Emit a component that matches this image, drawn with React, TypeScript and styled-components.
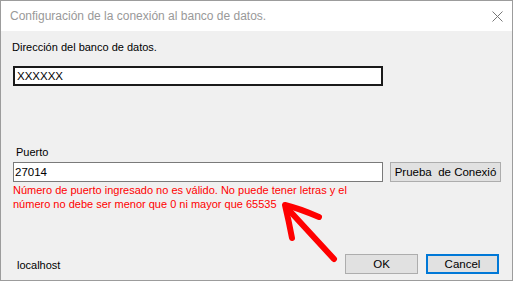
import React from "react";
import styled, { createGlobalStyle } from "styled-components";

const Global = createGlobalStyle`
  html, body { margin: 0; padding: 0; background: #ffffff; }
  body { font-family: "Liberation Sans", Arial, sans-serif; font-size: 11px; color: #000; }
`;

const Window = styled.div`
  position: relative;
  box-sizing: border-box;
  width: 513px;
  height: 281px;
  border: 1px solid #9c9c9c;
  display: flex;
  flex-direction: column;
  background: #f0f0f0;
`;

const TitleBar = styled.div`
  height: 30px;
  flex: none;
  background: #ffffff;
  display: flex;
  align-items: center;
  justify-content: space-between;
  padding: 0 9px 1px 9px;
  box-sizing: border-box;
`;

const Title = styled.span`
  font-family: "Liberation Sans", Arial, sans-serif;
  font-size: 12px;
  color: #999999;
`;

const CloseIcon = styled.svg`
  width: 11px;
  height: 11px;
  margin-top: 1px;
`;

const Content = styled.div`
  flex: 1;
  display: flex;
  flex-direction: column;
  padding: 9px 0 0 11px;
  box-sizing: border-box;
`;

const Label = styled.div<{ $top?: number; $left?: number }>`
  line-height: 15px;
  margin-top: ${(p) => p.$top ?? 0}px;
  margin-left: ${(p) => p.$left ?? 0}px;
`;

const TextBox = styled.div<{ $focused?: boolean; $top: number }>`
  box-sizing: border-box;
  width: 370px;
  height: 20px;
  margin-left: 1px;
  margin-top: ${(p) => p.$top}px;
  background: #ffffff;
  border: ${(p) => (p.$focused ? "2px solid #1a1a1a" : "1px solid #7a7a7a")};
  padding-left: ${(p) => (p.$focused ? 2 : 1)}px;
  display: flex;
  align-items: center;
  line-height: 15px;
  font-size: 11.5px;
`;

const Row = styled.div`
  display: flex;
  align-items: flex-start;
`;

const ButtonSlot = styled.div`
  margin: 2px 0 0 7px;
`;

const Button = styled.div<{ $width: number; $primary?: boolean }>`
  box-sizing: border-box;
  width: ${(p) => p.$width}px;
  height: 20px;
  background: #e1e1e1;
  border: ${(p) => (p.$primary ? "2px solid #0078d7" : "1px solid #adadad")};
  display: flex;
  align-items: center;
  justify-content: center;
  white-space: pre;
  overflow: hidden;
  line-height: 15px;
  font-size: 11.5px;
`;

const ErrorText = styled.div`
  color: #ff0000;
  line-height: 14px;
  margin-top: 1px;
  margin-left: 1px;
  width: 362px;
`;

const Footer = styled.div`
  display: flex;
  align-items: center;
  margin-top: 43px;
  padding-right: 13px;
`;

const FooterLabel = styled.div`
  flex: 1;
  margin-left: 5px;
  line-height: 15px;
  padding-top: 2px;
`;

const ButtonGroup = styled.div`
  display: flex;
  gap: 8px;
`;

const Overlay = styled.svg`
  position: absolute;
  left: -1px;
  top: -1px;
  width: 519px;
  height: 286px;
  pointer-events: none;
  overflow: visible;
`;

export default function App() {
  return (
    <>
      <Global />
      <Window>
        <TitleBar>
          <Title>Configuración de la conexión al banco de datos.</Title>
          <CloseIcon viewBox="0 0 11 11">
            <path d="M0.5 0.5 L10.5 10.5 M10.5 0.5 L0.5 10.5" stroke="#777" strokeWidth="1" fill="none" />
          </CloseIcon>
        </TitleBar>
        <Content>
          <Label>Dirección del banco de datos.</Label>
          <TextBox $focused $top={11}>XXXXXX</TextBox>
          <Label $top={59} $left={4}>Puerto</Label>
          <Row>
            <TextBox $top={2}>27014</TextBox>
            <ButtonSlot>
              <Button $width={111}>{"Prueba  de Conexió"}</Button>
            </ButtonSlot>
          </Row>
          <ErrorText>
            Número de puerto ingresado no es válido. No puede tener letras y el número no debe ser menor que 0 ni mayor que 65535
          </ErrorText>
          <Footer>
            <FooterLabel>localhost</FooterLabel>
            <ButtonGroup>
              <Button $width={73}>OK</Button>
              <Button $width={73} $primary>Cancel</Button>
            </ButtonGroup>
          </Footer>
        </Content>
        <Overlay viewBox="0 0 519 286">
          <g stroke="#ff0000" strokeWidth="6" strokeLinecap="round" strokeLinejoin="round" fill="none">
            <path d="M334 259 L287 208" />
            <path d="M319 217 Q298 208 285 205 Q289 222 292 238" />
          </g>
        </Overlay>
      </Window>
    </>
  );
}
